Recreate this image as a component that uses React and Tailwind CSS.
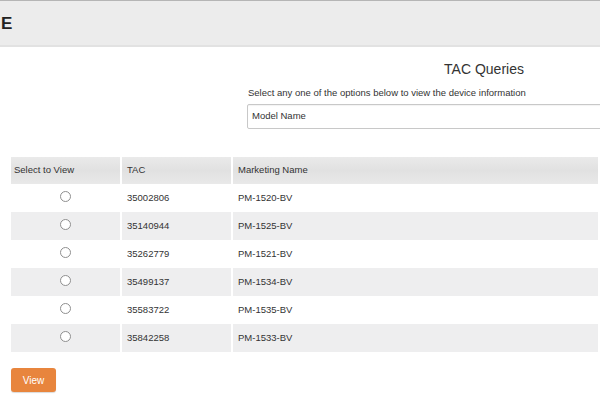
import { useState } from 'react';

const rows = [
  { tac: '35002806', name: 'PM-1520-BV' },
  { tac: '35140944', name: 'PM-1525-BV' },
  { tac: '35262779', name: 'PM-1521-BV' },
  { tac: '35499137', name: 'PM-1534-BV' },
  { tac: '35583722', name: 'PM-1535-BV' },
  { tac: '35842258', name: 'PM-1533-BV' },
];

const headCell = 'bg-gradient-to-b from-[#eaeaea] via-[#e1e1e1] to-[#e9e9e9] flex items-center';

const App = () => {
  const [selected, setSelected] = useState(null);

  return (
    <div className="w-[600px] h-[400px] overflow-hidden bg-white text-[#333] font-['Liberation_Sans',Arial,sans-serif]">
      {/* top bar */}
      <header className="h-[47px] bg-[#ececec] border-t border-[#b5b5b5] border-b-2 border-b-[#e2e2e2] flex items-center pl-[1px]">
        <span className="text-[17px] font-bold text-[#222] leading-none">E</span>
      </header>

      <div className="flex">
        <div className="w-[247px] shrink-0" />
        <div className="w-[474px] shrink-0">
          <h2 className="mt-[14px] text-center text-[14px] leading-[17px] text-[#333]">TAC Queries</h2>
          <p className="mt-[9px] text-[9.5px] leading-[12px] pl-[1px]">
            Select any one of the options below to view the device information
          </p>
          <div className="mt-[5px] h-[25px] border border-[#c8c8c8] rounded-[2px] flex items-center pl-[4px] text-[9.5px] shadow-[inset_0_1px_1px_rgba(0,0,0,0.05)]">
            Model Name
          </div>
        </div>
      </div>

      <div className="mt-[28px] ml-[11px] w-[587px]">
        <div className="grid grid-cols-[111px_111px_1fr] h-[27px] text-[9.5px]">
          <div className={`${headCell} pl-[3px] border-r-2 border-white`}>Select to View</div>
          <div className={`${headCell} pl-[5px] border-r-2 border-white`}>TAC</div>
          <div className={`${headCell} pl-[5px]`}>Marketing Name</div>
        </div>
        {rows.map((row, i) => {
          const bg = i % 2 === 1 ? 'bg-[#eeeeef]' : 'bg-white';
          return (
            <div key={row.tac} className="grid grid-cols-[111px_111px_1fr] h-[28px] text-[9.5px]">
              <div className={`${bg} flex justify-center pt-[7px] border-r-2 border-white`}>
                <button
                  onClick={() => setSelected(i)}
                  className="w-[11px] h-[11px] rounded-full border border-[#8f8f8f] bg-white flex items-center justify-center"
                >
                  {selected === i && <span className="w-[5px] h-[5px] rounded-full bg-[#555]" />}
                </button>
              </div>
              <div className={`${bg} flex items-center pl-[5px] border-r-2 border-white`}>{row.tac}</div>
              <div className={`${bg} flex items-center pl-[5px]`}>{row.name}</div>
            </div>
          );
        })}
        <button className="mt-[16px] w-[45px] h-[24px] bg-[#e8853d] rounded-[3px] text-white text-[10px] shadow-[0_1px_1px_rgba(0,0,0,0.15)]">
          View
        </button>
      </div>
    </div>
  );
};

export default App;
